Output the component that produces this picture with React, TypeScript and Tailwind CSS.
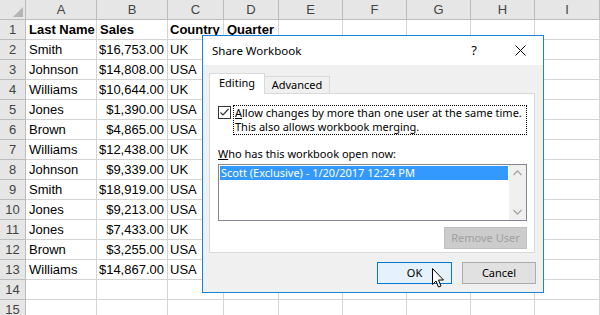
import React from 'react';

const cols = ['A', 'B', 'C', 'D', 'E', 'F', 'G', 'H', 'I'];

const rows: [string, string, string, string][] = [
  ['Last Name', 'Sales', 'Country', 'Quarter'],
  ['Smith', '$16,753.00', 'UK', ''],
  ['Johnson', '$14,808.00', 'USA', ''],
  ['Williams', '$10,644.00', 'UK', ''],
  ['Jones', '$1,390.00', 'USA', ''],
  ['Brown', '$4,865.00', 'USA', ''],
  ['Williams', '$12,438.00', 'UK', ''],
  ['Johnson', '$9,339.00', 'UK', ''],
  ['Smith', '$18,919.00', 'USA', ''],
  ['Jones', '$9,213.00', 'USA', ''],
  ['Jones', '$7,433.00', 'UK', ''],
  ['Brown', '$3,255.00', 'USA', ''],
  ['Williams', '$14,867.00', 'USA', ''],
  ['', '', '', ''],
  ['', '', '', ''],
];

const cell = 'h-[20px] border-r border-b border-[#d4d4d4] flex items-center overflow-visible whitespace-nowrap';
const head = 'h-[20px] border-r border-b border-[#bcbcbc] bg-[#e6e6e6] flex items-center justify-center text-[#444]';

function Sheet() {
  return (
    <div
      className="grid grid-cols-[26px_71px_71px_56px_55px_64px_64px_64px_64px_65px] text-[13px] text-black"
      style={{ fontFamily: '"Liberation Sans", Arial, sans-serif' }}
    >
      <div className={head + ' relative'}>
        <div className="absolute right-[2px] bottom-[2px] w-0 h-0 border-l-[10px] border-l-transparent border-b-[10px] border-b-[#b4b4b4]" />
      </div>
      {cols.map((c) => (
        <div key={c} className={head}>{c}</div>
      ))}
      {rows.map((r, i) => (
        <React.Fragment key={i}>
          <div className={head}>{i + 1}</div>
          <div className={cell + ' px-[3px]' + (i === 0 ? ' font-bold' : '')}>{r[0]}</div>
          <div className={cell + ' px-[3px]' + (i === 0 ? ' font-bold justify-start' : ' justify-end')}>{r[1]}</div>
          <div className={cell + ' px-[2px]' + (i === 0 ? ' font-bold' : '')}>{r[2]}</div>
          <div className={cell + ' px-[3px] font-bold'}>{r[3]}</div>
          {[0, 1, 2, 3, 4].map((k) => (
            <div key={k} className={cell} />
          ))}
        </React.Fragment>
      ))}
    </div>
  );
}

function Dialog() {
  return (
    <div
      className="absolute left-[202px] top-[35px] w-[342px] h-[258px] border border-[#1883d7] bg-[#f0f0f0] text-[11px] text-black flex flex-col whitespace-nowrap"
      style={{ fontFamily: '"Noto Sans", "Open Sans", sans-serif' }}
    >
      <div className="h-[29px] shrink-0 bg-white flex items-center pl-[9px] pr-[17px]">
        <span className="text-[11.5px]">Share Workbook</span>
        <span className="ml-auto mr-[38px] text-[13px]">?</span>
        <svg width="11" height="11" viewBox="0 0 11 11">
          <path d="M0.5 0.5 L10.5 10.5 M10.5 0.5 L0.5 10.5" stroke="#000" strokeWidth="1" />
        </svg>
      </div>

      <div className="px-[6px] pt-[7px]">
        <div className="flex items-end h-[21px]">
          <div className="h-[21px] w-[56px] bg-white border border-b-0 border-[#d9d9d9] flex items-center justify-center relative z-10 -mb-px pb-px">
            Editing
          </div>
          <div className="h-[17px] w-[65px] border border-l-0 border-b-0 border-[#d9d9d9] flex items-center justify-center">
            Advanced
          </div>
        </div>
        <div className="h-[160px] w-[326px] bg-white border border-[#d9d9d9] pl-[8px] pt-[11px] pr-[6px]">
          <div className="flex items-start gap-[2px]">
            <div className="mt-[1px] w-[13px] h-[13px] border border-[#333] bg-white flex items-center justify-center shrink-0">
              <svg width="11" height="11" viewBox="0 0 11 11">
                <path d="M1.5 5.5 L4 8 L9.5 2" stroke="#333" strokeWidth="1.2" fill="none" />
              </svg>
            </div>
            <div className="border border-dotted border-[#000] leading-[14px] px-[1px] w-[294px] overflow-hidden">
              <div><span className="underline">A</span>llow changes by more than one user at the same time.</div>
              <div>This also allows workbook merging.</div>
            </div>
          </div>
          <div className="mt-[12px] leading-[14px]">
            <span className="underline">W</span>ho has this workbook open now:
          </div>
          <div className="mt-[3px] w-[309px] h-[57px] border border-[#828790] flex">
            <div className="flex-1 p-[1px]">
              <div className="h-[14px] bg-[#3399ff] text-white leading-[14px] pl-[1px]">
                Scott (Exclusive) - 1/20/2017 12:24 PM
              </div>
            </div>
            <div className="w-[17px] bg-[#f0f0f0] flex flex-col items-center justify-between py-[5px]">
              <svg width="9" height="6" viewBox="0 0 9 6">
                <path d="M0.5 5 L4.5 1 L8.5 5" stroke="#a6a6a6" strokeWidth="1.3" fill="none" />
              </svg>
              <svg width="9" height="6" viewBox="0 0 9 6">
                <path d="M0.5 1 L4.5 5 L8.5 1" stroke="#a6a6a6" strokeWidth="1.3" fill="none" />
              </svg>
            </div>
          </div>
          <div className="flex justify-end mt-[6px] w-[309px]">
            <div className="w-[83px] h-[22px] bg-[#cccccc] border border-[#bfbfbf] text-[#a0a0a0] flex items-center justify-center">
              Remove User
            </div>
          </div>
        </div>
      </div>

      <div className="flex justify-end gap-[10px] pr-[7px] mt-[9px]">
        <div className="w-[75px] h-[22px] bg-[#e5f1fb] border border-[#0078d7] flex items-center justify-center">
          OK
        </div>
        <div className="w-[74px] h-[22px] bg-[#e1e1e1] border border-[#adadad] flex items-center justify-center">
          Cancel
        </div>
      </div>
    </div>
  );
}

function Cursor() {
  return (
    <svg className="absolute left-[431px] top-[267px]" width="14" height="22" viewBox="0 0 14 22">
      <path
        d="M1.5 1.5 L1.5 17.5 L5 14 L7.5 20 L10 19 L7.5 13 L12.5 13 Z"
        fill="#fff"
        stroke="#000"
        strokeWidth="1"
        strokeLinejoin="miter"
      />
    </svg>
  );
}

export default function App() {
  return (
    <div className="relative w-[600px] h-[315px] overflow-hidden bg-white">
      <Sheet />
      <Dialog />
      <Cursor />
    </div>
  );
}
